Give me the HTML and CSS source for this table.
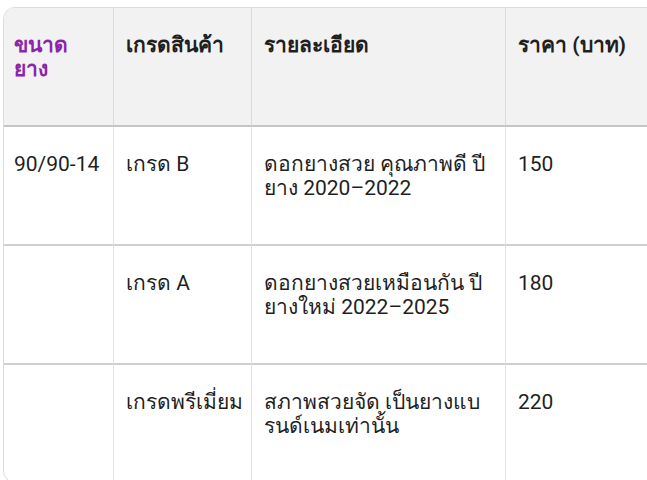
FILE: index.html
```html
<!DOCTYPE html>
<html lang="th">
<head>
<meta charset="utf-8">
<link rel="stylesheet" href="styles.css">
</head>
<body>
<div class="wrap">
  <table class="tires">
    <colgroup>
      <col class="c1"><col class="c2"><col class="c3"><col class="c4">
    </colgroup>
    <thead>
      <tr>
        <th class="accent">ขนาด<br>ยาง</th>
        <th>เกรดสินค้า</th>
        <th>รายละเอียด</th>
        <th>ราคา (บาท)</th>
      </tr>
    </thead>
    <tbody>
      <tr>
        <td>90/90-14</td>
        <td>เกรด B</td>
        <td>ดอกยางสวย คุณภาพดี ปี<br>ยาง 2020–2022</td>
        <td>150</td>
      </tr>
      <tr>
        <td></td>
        <td>เกรด A</td>
        <td>ดอกยางสวยเหมือนกัน ปี<br>ยางใหม่ 2022–2025</td>
        <td>180</td>
      </tr>
      <tr>
        <td></td>
        <td>เกรดพรีเมี่ยม</td>
        <td>สภาพสวยจัด เป็นยางแบ<br>รนด์เนมเท่านั้น</td>
        <td>220</td>
      </tr>
    </tbody>
  </table>
</div>
</body>
</html>
```
FILE: styles.css
```css
html, body {
  margin: 0;
  padding: 0;
  background: #ffffff;
  overflow: hidden;
}
.wrap {
  padding: 7px 0 0 3px;
  width: 700px;
}
.tires {
  border-collapse: separate;
  border-spacing: 0;
  table-layout: fixed;
  width: 660px;
  border: 1px solid #dcdcdc;
  border-radius: 12px;
  overflow: hidden;
  font-family: Roboto, "Noto Sans", sans-serif;
  font-size: 21px;
  line-height: 24px;
  color: #1f1f1f;
}
.c1 { width: 109px; }
.c2 { width: 138px; }
.c3 { width: 254px; }
.c4 { width: 159px; }
.tires th, .tires td {
  text-align: left;
  vertical-align: top;
  padding: 25px 6px 0 12px;
  border-left: 1px solid #e3e3e3;
  white-space: nowrap;
  overflow: visible;
}
.tires th:first-child, .tires td:first-child {
  border-left: none;
  padding-left: 10px;
}
.tires th {
  background: #f2f2f2;
  font-weight: 700;
  height: 92px;
  border-bottom: 2px solid #c4c4c4;
  border-left-color: #dadada;
}
.tires th.accent {
  color: #8e24aa;
}
.tires td {
  font-weight: 400;
  height: 92px;
  border-bottom: 2px solid #cfcfcf;
}
.tires tbody tr:last-child td {
  border-bottom: none;
}
```
